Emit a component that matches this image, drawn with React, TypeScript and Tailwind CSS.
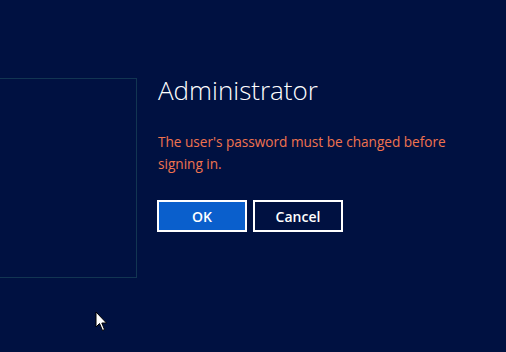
export default function App() {
  return (
    <div className="relative w-[506px] h-[352px] overflow-hidden bg-[#001141]" style={{ fontFamily: '"Open Sans", "Noto Sans", sans-serif' }}>
      <div className="flex pt-[78px]">
        <div className="w-[160px] h-[200px] -ml-[23px] border border-[#123552] shrink-0" />
        <div className="ml-[21px] flex flex-col">
          <div className="text-[26px] leading-[30px] font-light text-white mt-[-3px]">Administrator</div>
          <div className="mt-[26px] text-[13.6px] leading-[22px] text-[#f0734f] w-[300px]">
            The user's password must be changed before signing in.
          </div>
          <div className="mt-[25px] flex gap-[6px] -ml-[1px]">
            <button className="w-[90px] h-[32px] border-2 border-white bg-[#0a5fcc] text-white text-[14px] font-semibold">OK</button>
            <button className="w-[90px] h-[32px] border-2 border-white bg-[#001141] text-white text-[14px] font-semibold">Cancel</button>
          </div>
        </div>
      </div>
      <svg className="absolute left-[95px] top-[311px]" width="14" height="22" viewBox="0 0 14 22">
        <path d="M1 1 L1 16 L4.5 12.5 L7.5 19.5 L9.5 18.5 L6.8 12 L11.5 12 Z" fill="white" stroke="black" strokeWidth="1" />
      </svg>
    </div>
  );
}
